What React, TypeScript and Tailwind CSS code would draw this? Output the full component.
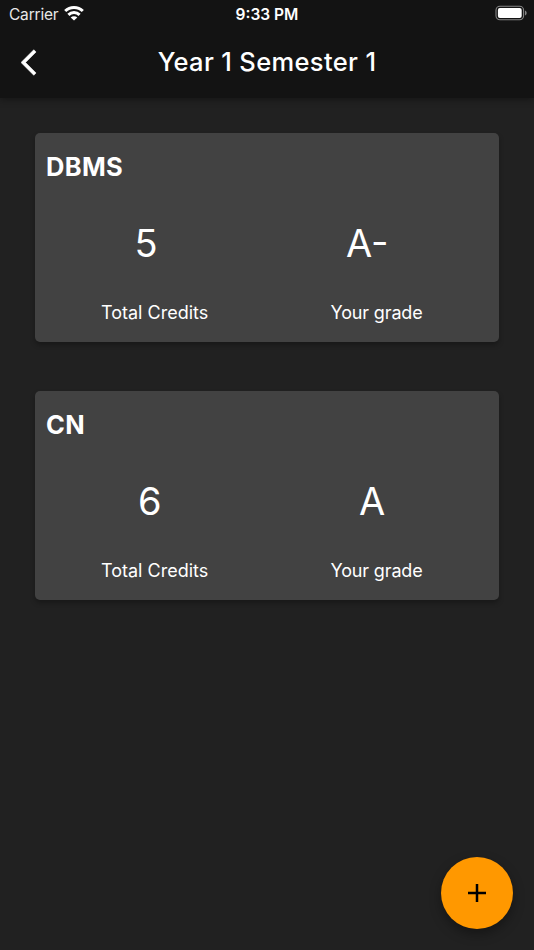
type Subject = {
  name: string;
  credits: string;
  grade: string;
  creditsPad: string;
  gradePad: string;
};

const subjects: Subject[] = [
  { name: 'DBMS', credits: '5', grade: 'A-', creditsPad: 'pl-[99.5px]', gradePad: 'pl-[81px]' },
  { name: 'CN', credits: '6', grade: 'A', creditsPad: 'pl-[103px]', gradePad: 'pl-[94px]' },
];

function StatusBar() {
  return (
    <div className="grid h-7 grid-cols-3 items-center text-[15.5px] leading-7">
      <div className="flex items-center gap-[6px] pl-[9px]">
        <span className="pt-px tracking-[-0.2px] text-[#e8e8e8]">Carrier</span>
        <svg width="20" height="16" viewBox="0 0 20 16" fill="none" stroke="white" strokeWidth="3" className="-mt-[3px]">
          <path d="M1.2 6a12.6 12.6 0 0 1 17.6 0" />
          <path d="M4.4 9.9a8 8 0 0 1 11.2 0" />
          <path d="M10 15.6 6.7 12.5a4.7 4.7 0 0 1 6.6 0z" fill="white" stroke="none" />
        </svg>
      </div>
      <span className="pt-px text-center font-semibold">9:33 PM</span>
      <div className="flex justify-end pr-[7px]">
        <svg width="32" height="16" viewBox="0 0 32 16" className="-mt-[3px]">
          <rect x="1" y="1.2" width="27.6" height="13.6" rx="4" fill="none" stroke="#858585" strokeWidth="1.1" />
          <rect x="2.9" y="3.1" width="23.8" height="9.8" rx="2" fill="white" />
          <path d="M30 5.6c2.2.8 2.2 4 0 4.8z" fill="#858585" />
        </svg>
      </div>
    </div>
  );
}

function SubjectCard({ subject }: { subject: Subject }) {
  return (
    <section className="h-[209px] rounded-[5px] bg-[#424242] pt-[18px] shadow-[0_3px_5px_rgba(0,0,0,0.28)]">
      <h2 className="pl-[11px] text-[25.5px] leading-8 font-bold tracking-[0.3px]">{subject.name}</h2>
      <div className="mt-[34px] grid grid-cols-[230px_1fr] text-[38px] leading-[52px] font-normal">
        <div className={subject.creditsPad}>{subject.credits}</div>
        <div className={subject.gradePad}>{subject.grade}</div>
      </div>
      <div className="mt-[32px] grid grid-cols-[230px_1fr] text-[18px] leading-6">
        <div className="pl-[66px]">Total Credits</div>
        <div className="pl-[65.5px] tracking-[-0.15px]">Your grade</div>
      </div>
    </section>
  );
}

export default function App() {
  return (
    <div className="flex h-[950px] w-[534px] flex-col overflow-hidden bg-[#212121] font-['Inter',sans-serif] text-white">
      <header className="h-[98px] shrink-0 bg-[#131313] shadow-[0_2px_7px_rgba(0,0,0,0.35)]">
        <StatusBar />
        <div className="grid h-[69px] grid-cols-[80px_1fr_80px] items-center">
          <button className="pl-[21px]" aria-label="Back">
            <svg width="31" height="31" viewBox="0 0 24 24" fill="white" stroke="white" strokeWidth="0.4">
              <path d="M11.67 3.87 9.9 2.1 0 12l9.9 9.9 1.77-1.77L3.54 12z" />
            </svg>
          </button>
          <h1 className="text-center text-[25.5px] font-medium tracking-[0.35px] whitespace-nowrap">Year 1 Semester 1</h1>
        </div>
      </header>
      <main className="flex grow flex-col gap-[49px] px-[35px] pt-[35px]">
        {subjects.map((s) => (
          <SubjectCard key={s.name} subject={s} />
        ))}
      </main>
      <div className="flex shrink-0 justify-end pr-[21px] pb-[21px]">
        <button
          className="flex size-[72px] items-center justify-center rounded-full bg-[#ff9800] shadow-[0_5px_12px_rgba(0,0,0,0.35)]"
          aria-label="Add subject"
        >
          <svg width="18" height="18" viewBox="0 0 18 18" stroke="black" strokeWidth="2.5">
            <path d="M9 0v18M0 9h18" />
          </svg>
        </button>
      </div>
    </div>
  );
}
